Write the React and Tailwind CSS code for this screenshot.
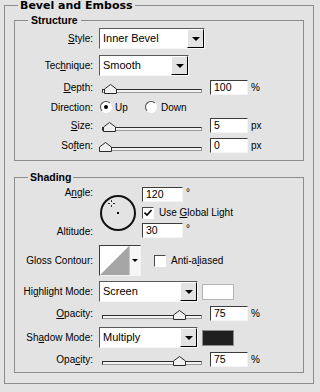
import React from 'react';

const Tri = () => (
  <span className="h-0 w-0 border-x-[4px] border-t-[4px] border-x-transparent border-t-black" />
);

const Select = ({ value, width }) => (
  <div className={`flex h-[21px] ${width} border border-t-[#5a5a5a] border-l-[#5a5a5a] border-b-[#f8f8f8] border-r-[#f8f8f8]`}>
    <div className="flex flex-1 items-center bg-white pl-[3px] text-[11px]">{value}</div>
    <div className="flex w-[17px] items-center justify-center border border-t-white border-l-white border-r-black border-b-black bg-[#e3e3e3]">
      <Tri />
    </div>
  </div>
);

const Field = ({ value, width = 'w-[38px]' }) => (
  <div className={`flex h-[15px] ${width} items-center border border-t-[#3c3c3c] border-l-[#3c3c3c] border-b-[#f4f4f4] border-r-[#f4f4f4] bg-white pl-[3px] text-[10.5px] leading-none`}>
    {value}
  </div>
);

const Slider = ({ thumb }) => (
  <div className="relative ml-[3px] h-[10px] w-[100px]">
    <div className="absolute bottom-0 left-0 right-0 h-[4px] border border-t-[#2e2e2e] border-l-[#2e2e2e] border-b-[#9a9a9a] border-r-[#9a9a9a] bg-[#f2f2f2]" />
    <svg className="absolute bottom-[-1px]" style={{ left: thumb }} width="13" height="10" viewBox="0 0 13 10">
      <path d="M0.5 9.5 V5 L6.5 0.5 L12.5 5 V9.5 Z" fill="#f0f0f0" stroke="#2a2a2a" />
    </svg>
  </div>
);

const SliderRow = ({ thumb, value, unit }) => (
  <div className="flex items-center">
    <Slider thumb={thumb} />
    <div className="ml-[8px]">
      <Field value={value} />
    </div>
    <span className="ml-[3px]">{unit}</span>
  </div>
);

const Radio = ({ on }) => (
  <span className="flex h-[12px] w-[12px] items-center justify-center rounded-full border border-t-[#4a4a4a] border-l-[#4a4a4a] border-b-white border-r-white bg-white">
    {on && <span className="h-[4px] w-[4px] rounded-full bg-black" />}
  </span>
);

const Check = ({ on }) => (
  <span className="flex h-[12px] w-[12px] items-center justify-center border border-t-[#4a4a4a] border-l-[#4a4a4a] border-b-white border-r-white bg-white">
    {on && (
      <svg width="8" height="8" viewBox="0 0 8 8">
        <path d="M0.5 3.5 L3 6 L7.5 1" fill="none" stroke="#000" strokeWidth="1.6" />
      </svg>
    )}
  </span>
);

const Row = ({ label, className = '', children }) => (
  <div className={`flex items-center ${className}`}>
    <div className="w-[78px] text-right">{label}</div>
    <div className="ml-[6px] flex items-center">{children}</div>
  </div>
);

export default function App() {
  return (
    <div className="h-[392px] w-[320px] bg-[#e3e3e3] pl-[4px] font-['Liberation_Sans',Arial,sans-serif] text-[10px] text-black">
      <fieldset className="w-[310px] border border-[#8c8c8c] pb-[10px]">
        <legend className="ml-[13px] px-[2px] font-['DejaVu_Sans',sans-serif] text-[11px] font-bold leading-[11px]">
          Bevel and Emboss
        </legend>

        {/* Structure */}
        <fieldset className="mx-[9px] mt-[3px] border border-[#8c8c8c] pb-[6px]">
          <legend className="ml-[13px] px-[3px] text-[10.5px] font-bold leading-[12px]">Structure</legend>

          <Row className="mt-[2px] h-[21px]" label={<><u>S</u>tyle:</>}>
            <Select value="Inner Bevel" width="w-[106px]" />
          </Row>
          <Row className="mt-[6px] h-[21px]" label={<>Tec<u>h</u>nique:</>}>
            <Select value="Smooth" width="w-[90px]" />
          </Row>
          <Row className="mt-[3px] h-[17px]" label={<><u>D</u>epth:</>}>
            <SliderRow thumb={2} value="100" unit="%" />
          </Row>
          <Row className="mt-[2px] h-[18px]" label="Direction:">
            <div className="ml-[1px] flex w-[45px] items-center">
              <Radio on />
              <span className="ml-[3px]">Up</span>
            </div>
            <Radio />
            <span className="ml-[4px]">Down</span>
          </Row>
          <Row className="mt-[1px] h-[17px]" label={<><u>S</u>ize:</>}>
            <SliderRow thumb={1} value="5" unit="px" />
          </Row>
          <Row className="mt-[3px] h-[17px]" label={<>So<u>f</u>ten:</>}>
            <SliderRow thumb={-3} value="0" unit="px" />
          </Row>
        </fieldset>

        {/* Shading */}
        <fieldset className="mx-[9px] mt-[10px] border border-[#8c8c8c] pb-[5px]">
          <legend className="ml-[13px] px-[2px] text-[10.5px] font-bold leading-[12px]">Shading</legend>

          <div className="mt-[3px] flex h-[53px]">
            <div className="flex w-[78px] flex-col justify-between text-right">
              <div className="h-[14px] leading-[14px]">A<u>n</u>gle:</div>
              <div className="h-[14px] leading-[14px]">Altitude:</div>
            </div>
            <div className="relative ml-[7px] h-[36px] w-[36px] self-center rounded-full border-2 border-[#111]">
              <span className="absolute left-[15px] top-[15px] h-[2px] w-[2px] bg-black" />
              <svg className="absolute left-[6px] top-[3px]" width="7" height="7" viewBox="0 0 7 7">
                <path d="M3.5 0 V2 M3.5 5 V7 M0 3.5 H2 M5 3.5 H7" stroke="#333" strokeWidth="1" />
              </svg>
            </div>
            <div className="ml-[6px] flex flex-col justify-between py-[1px]">
              <div className="flex items-center">
                <Field value="120" width="w-[41px]" />
                <span className="ml-[3px] self-start leading-[12px]">°</span>
              </div>
              <div className="flex items-center">
                <Check on />
                <span className="ml-[5px]">Use <u>G</u>lobal Light</span>
              </div>
              <div className="flex items-center">
                <Field value="30" width="w-[41px]" />
                <span className="ml-[3px] self-start leading-[12px]">°</span>
              </div>
            </div>
          </div>

          <Row className="mt-[6px] h-[31px]" label="Gloss Contour:">
            <div className="flex h-[31px] w-[42px] border border-t-[#3c3c3c] border-l-[#3c3c3c] border-b-[#f4f4f4] border-r-[#f4f4f4] bg-white">
              <svg width="29" height="29" viewBox="0 0 29 29">
                <path d="M0 29 L29 0 V29 Z" fill="#a6a6a6" />
              </svg>
              <div className="flex flex-1 items-center justify-center border-l border-[#c8c8c8] bg-[#f6f6f6]">
                <span className="h-0 w-0 border-x-[3px] border-t-[3px] border-x-transparent border-t-black" />
              </div>
            </div>
            <div className="ml-[13px] flex items-center">
              <Check />
              <span className="ml-[5px]">Anti-a<u>l</u>iased</span>
            </div>
          </Row>

          <Row className="mt-[5px] h-[21px]" label={<>Hi<u>g</u>hlight Mode:</>}>
            <Select value="Screen" width="w-[99px]" />
            <span className="ml-[4px] h-[16px] w-[32px] border border-[#b4b4b4] bg-white" />
          </Row>
          <Row className="mt-[4px] h-[15px]" label={<><u>O</u>pacity:</>}>
            <SliderRow thumb={71} value="75" unit="%" />
          </Row>
          <Row className="mt-[6px] h-[21px]" label={<>Sh<u>a</u>dow Mode:</>}>
            <Select value="Multiply" width="w-[99px]" />
            <span className="ml-[4px] h-[16px] w-[32px] border border-[#8c8c8c] bg-[#202020]" />
          </Row>
          <Row className="mt-[4px] h-[15px]" label={<>Opa<u>c</u>ity:</>}>
            <SliderRow thumb={71} value="75" unit="%" />
          </Row>
        </fieldset>
      </fieldset>
    </div>
  );
}
